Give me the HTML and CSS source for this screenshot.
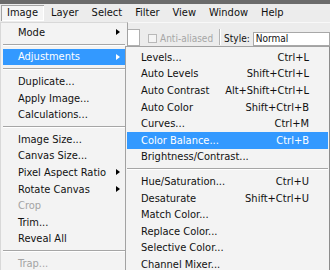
FILE: index.html
```html
<!DOCTYPE html>
<html lang="en">
<head>
<meta charset="UTF-8" />
<title>Image menu</title>
<link rel="stylesheet" href="styles.css">
</head>
<body>

<div class="titlebar"></div>

<!-- Menu bar -->
<div class="menubar">
  <span class="menu-title active">Image</span>
  <span class="menu-title">Layer</span>
  <span class="menu-title">Select</span>
  <span class="menu-title">Filter</span>
  <span class="menu-title">View</span>
  <span class="menu-title">Window</span>
  <span class="menu-title">Help</span>
</div>

<!-- Options bar -->
<div class="optionsbar">
  <span class="field"></span>
  <span class="check"><span class="box"></span>Anti-aliased</span>
  <span class="divider"></span>
  <span class="label">Style:</span>
  <span class="select">Normal</span>
</div>

<!-- Image menu -->
<ul class="menu image-menu">
  <li class="item">Mode<span class="arrow"></span></li>
  <li class="sep"></li>
  <li class="item selected">Adjustments<span class="arrow"></span></li>
  <li class="sep"></li>
  <li class="item">Duplicate...</li>
  <li class="item">Apply Image...</li>
  <li class="item">Calculations...</li>
  <li class="sep"></li>
  <li class="item">Image Size...</li>
  <li class="item">Canvas Size...</li>
  <li class="item">Pixel Aspect Ratio<span class="arrow"></span></li>
  <li class="item">Rotate Canvas<span class="arrow"></span></li>
  <li class="item disabled">Crop</li>
  <li class="item">Trim...</li>
  <li class="item">Reveal All</li>
  <li class="sep"></li>
  <li class="item disabled">Trap...</li>
</ul>

<!-- Adjustments submenu -->
<ul class="menu sub-menu">
  <li class="item">Levels...<span class="key">Ctrl+L</span></li>
  <li class="item">Auto Levels<span class="key">Shift+Ctrl+L</span></li>
  <li class="item">Auto Contrast<span class="key">Alt+Shift+Ctrl+L</span></li>
  <li class="item">Auto Color<span class="key">Shift+Ctrl+B</span></li>
  <li class="item">Curves...<span class="key">Ctrl+M</span></li>
  <li class="item selected">Color Balance...<span class="key">Ctrl+B</span></li>
  <li class="item">Brightness/Contrast...</li>
  <li class="sep"></li>
  <li class="item">Hue/Saturation...<span class="key">Ctrl+U</span></li>
  <li class="item">Desaturate<span class="key">Shift+Ctrl+U</span></li>
  <li class="item">Match Color...</li>
  <li class="item">Replace Color...</li>
  <li class="item">Selective Color...</li>
  <li class="item">Channel Mixer...</li>
</ul>

</body>
</html>
```

FILE: styles.css
```css
body {
  font-family: "DejaVu Sans", sans-serif;
  font-stretch: condensed;
  font-size: 11px;
  color: #111;
  background-color: #9c9c9c;
  margin: 0;
  width: 330px;
  height: 270px;
  overflow: hidden;
  position: relative;
}

.titlebar {
  height: 4px;
  background-color: #6b6b6b;
}

.menubar {
  display: flex;
  align-items: center;
  gap: 1px;
  height: 18px;
  padding-left: 1px;
  background-color: #ececec;
}

.menu-title {
  padding: 0 6px;
  line-height: 16px;
}

.menu-title.active {
  background-color: #f5f5f5;
  box-shadow: inset 1px 1px 0 #a4a4a4, inset -1px -1px 0 #fff;
}

.optionsbar {
  display: flex;
  align-items: center;
  height: 24px;
  border-top: 1px solid #f8f8f8;
  background-color: #ececec;
  font-size: 10px;
}

.field {
  width: 80px;
  height: 17px;
  margin-left: 60px;
  margin-right: 8px;
  margin-top: 4px;
  background: white;
  border: 1px solid #b0b0b0;
  box-sizing: border-box;
}

.check {
  display: flex;
  align-items: center;
  margin-top: 6px;
  color: #a6a6a6;
}

.check .box {
  width: 9px;
  height: 9px;
  margin-right: 3px;
  border: 1px solid #b8b8b8;
  background: #f4f4f4;
  box-sizing: border-box;
}

.divider {
  width: 1px;
  height: 16px;
  margin: 4px 3px 0 6px;
  background-color: #b4b4b4;
  border-right: 1px solid #fff;
}

.label {
  margin-top: 6px;
  margin-right: 3px;
}

.select {
  flex: 1;
  height: 14px;
  margin-top: 8px;
  line-height: 12px;
  padding-left: 2px;
  background: white;
  border: 1px solid #a8a8a8;
  box-sizing: border-box;
}

.menu {
  position: absolute;
  list-style: none;
  margin: 0;
  background-color: #f3f3f3;
  border: 1px solid #a2a2a2;
  border-bottom: none;
  box-sizing: border-box;
}

.image-menu {
  left: 0;
  top: 22px;
  width: 128px;
  height: 248px;
  padding: 1px 2px;
  border-left-color: #d8d8d8;
  border-top-color: #d8d8d8;
}

.sub-menu {
  left: 125px;
  top: 46px;
  width: 205px;
  height: 224px;
  padding: 2px 1px;
  border-right-color: #8c8c8c;
}

.item {
  display: flex;
  align-items: center;
  justify-content: space-between;
  height: 16.6px;
  white-space: nowrap;
}

.image-menu .item {
  padding: 0 5px 0 15px;
}

.sub-menu .item {
  padding: 0 19px 0 14px;
}

.item.selected {
  background-color: #3399ff;
  color: white;
}

.item.disabled {
  color: #a4a4a4;
}

.arrow {
  width: 0;
  height: 0;
  border-left: 4px solid #000;
  border-top: 3.5px solid transparent;
  border-bottom: 3.5px solid transparent;
}

.selected .arrow {
  border-left-color: white;
}

.sep {
  height: 0;
  margin: 3px 0;
  border-top: 1px solid #a6a6a6;
  border-bottom: 1px solid #fff;
}
```
